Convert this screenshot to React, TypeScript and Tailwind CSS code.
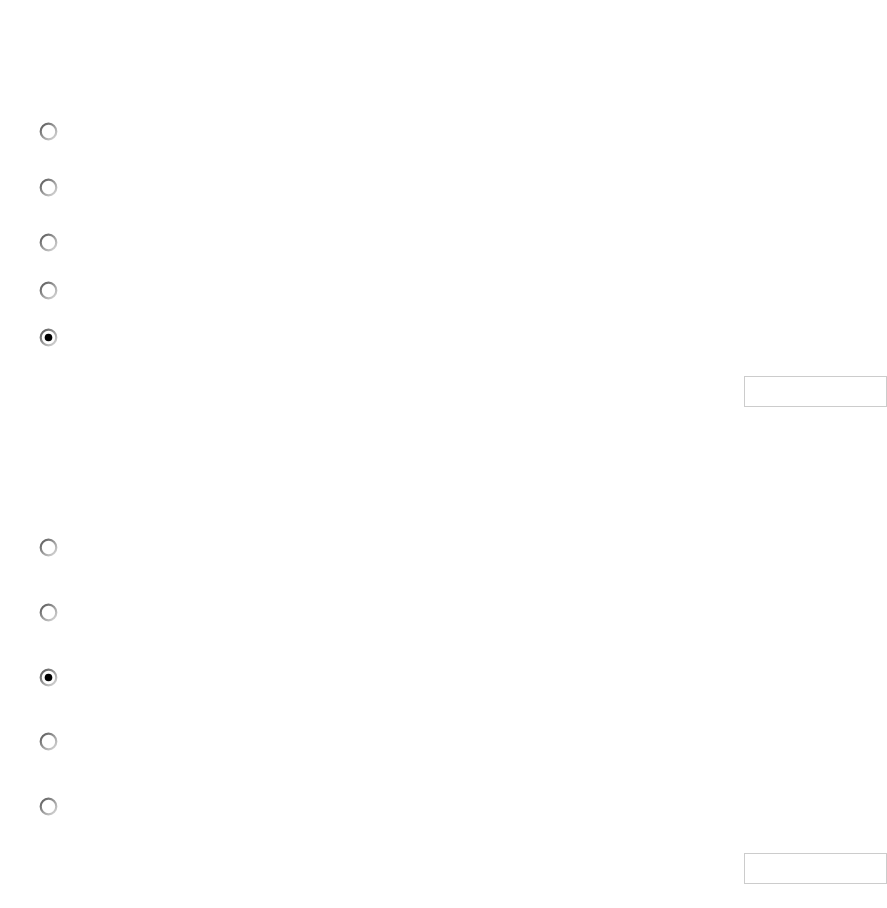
import React from 'react'

type RadioProps = { checked?: boolean; id: string }

const Radio: React.FC<RadioProps> = ({ checked, id }) => (
  <svg width="19" height="19" viewBox="0 0 19 19" className="block shrink-0">
    <defs>
      <linearGradient id={id} x1="0" y1="0" x2="1" y2="1">
        <stop offset="0" stopColor="#555" />
        <stop offset="0.5" stopColor="#9a9a9a" />
        <stop offset="1" stopColor="#dcdcdc" />
      </linearGradient>
    </defs>
    <circle cx="9.5" cy="9.5" r="7.8" fill="#fff" stroke={`url(#${id})`} strokeWidth="2.2" />
    {checked && <circle cx="9.5" cy="9.5" r="3.8" fill="#000" />}
  </svg>
)

const Group: React.FC<{ name: string; rows: number[]; selected: number }> = ({ name, rows, selected }) => (
  <div className="flex flex-col">
    {rows.map((h, i) => (
      <label key={i} className="flex items-start pl-[39px]" style={{ height: h }}>
        <Radio id={`${name}-${i}`} checked={i === selected} />
        <span className="ml-2 text-sm text-white">&nbsp;</span>
      </label>
    ))}
  </div>
)

export default function App() {
  return (
    <div className="min-h-screen bg-white font-['Liberation_Sans',Arial,sans-serif] pt-[122px]">
      <Group name="q1" rows={[56, 55, 48, 47, 48]} selected={4} />
      <div className="flex justify-end">
        <button className="w-[143px] h-[31px] bg-white border border-[#cccccc]" />
      </div>
      <div className="h-[131px]" />
      <Group name="q2" rows={[65, 65, 64, 65, 56]} selected={2} />
      <div className="flex justify-end">
        <button className="w-[143px] h-[31px] bg-white border border-[#cccccc]" />
      </div>
    </div>
  )
}
